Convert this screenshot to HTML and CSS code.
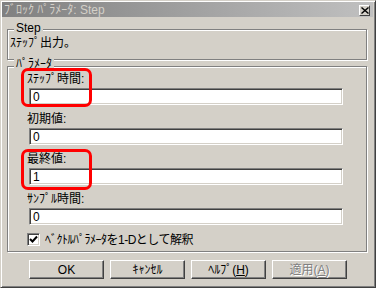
FILE: index.html
```html
<!DOCTYPE html>
<html lang="ja">
<head>
<meta charset="utf-8">
<link rel="stylesheet" href="styles.css">
</head>
<body>
<div class="window">
  <div class="titlebar">
    <span class="title">ﾌﾞﾛｯｸ ﾊﾟﾗﾒｰﾀ: Step</span>
    <span class="close"><svg width="8" height="7" viewBox="0 0 8 7"><path d="M0.5 0.5 L7.5 6.5 M7.5 0.5 L0.5 6.5" stroke="#000" stroke-width="1.4" fill="none"/></svg></span>
  </div>
  <div class="content">
    <div class="group g1">
      <span class="legend">Step</span>
      <p class="desc">ｽﾃｯﾌﾟ出力。</p>
    </div>
    <div class="group g2">
      <span class="legend">ﾊﾟﾗﾒｰﾀ</span>
      <div class="field">
        <div class="label">ｽﾃｯﾌﾟ時間:</div>
        <div class="input">0</div>
      </div>
      <div class="field">
        <div class="label">初期値:</div>
        <div class="input">0</div>
      </div>
      <div class="field">
        <div class="label">最終値:</div>
        <div class="input">1</div>
      </div>
      <div class="field">
        <div class="label">ｻﾝﾌﾟﾙ時間:</div>
        <div class="input">0</div>
      </div>
      <div class="check">
        <span class="box"><svg width="9" height="9" viewBox="0 0 9 9"><path d="M1 4 L3.5 6.5 L8 1.5" stroke="#000" stroke-width="2" fill="none"/></svg></span>
        <span class="check-text">ﾍﾞｸﾄﾙﾊﾟﾗﾒｰﾀを1-Dとして解釈</span>
      </div>
    </div>
    <div class="buttons">
      <div class="btn">OK</div>
      <div class="btn">ｷｬﾝｾﾙ</div>
      <div class="btn">ﾍﾙﾌﾟ(<u>H</u>)</div>
      <div class="btn disabled">適用(<u>A</u>)</div>
    </div>
  </div>
  <div class="mark m1"></div>
  <div class="mark m2"></div>
</div>
</body>
</html>
```
FILE: styles.css
```css
* { box-sizing: border-box; }
html, body {
  margin: 0;
  padding: 0;
  background: #d4d0c8;
}
body {
  font-family: "Liberation Sans", "Noto Sans CJK JP", sans-serif;
  font-size: 12px;
  line-height: 12px;
  color: #000;
}
.window {
  position: relative;
  width: 376px;
  height: 288px;
  background: #d4d0c8;
  border: 1px solid;
  border-color: #d4d0c8 #404040 #404040 #d4d0c8;
  box-shadow: inset 1px 1px #fff, inset -1px -1px #808080;
  padding: 1px 2px 2px 1px;
}
.titlebar {
  height: 15px;
  display: flex;
  align-items: center;
  justify-content: space-between;
  padding: 0 2px 0 2px;
  background: linear-gradient(to right, #808080, #c0c0c0);
}
.title {
  color: #d4d0c8;
  font-size: 12px;
  line-height: 12px;
  white-space: nowrap;
}
.close {
  width: 11px;
  height: 11px;
  background: #d4d0c8;
  border: 1px solid;
  border-color: #fff #404040 #404040 #fff;
  display: flex;
  align-items: center;
  justify-content: center;
  margin-top: 2px;
  margin-right: 1px;
}
.close svg { display: block; }
.content {
  padding: 12px 0 0 5px;
}
.group {
  position: relative;
  width: 360px;
  border: 1px solid #808080;
  box-shadow: inset 1px 1px #fff, 1px 1px #fff;
}
.legend {
  position: absolute;
  top: -7px;
  left: 6px;
  padding: 0 2px;
  background: #d4d0c8;
  line-height: 11px;
}
.g2 .legend { top: -8px; }
.g1 { height: 31px; }
.desc {
  margin: 0;
  padding: 7px 0 0 2px;
}
.g2 {
  margin-top: 6px;
  height: 186px;
  padding: 6px 0 0 19px;
}
.field {
  display: flex;
  flex-direction: column;
  align-items: flex-start;
  gap: 3px;
  margin-bottom: 8px;
}
.label { height: 12px; }
.input {
  margin-left: 2px;
  width: 314px;
  height: 17px;
  background: #fff;
  border: 1px solid;
  border-color: #808080 #fff #fff #808080;
  box-shadow: inset 1px 1px #404040, inset -1px -1px #d4d0c8;
  padding: 2px 0 0 3px;
  line-height: 12px;
}
.check {
  display: flex;
  align-items: center;
  gap: 5px;
  margin-top: 1px;
}
.check-text { letter-spacing: -0.5px; }
.box {
  width: 13px;
  height: 13px;
  background: #fff;
  border: 1px solid;
  border-color: #808080 #fff #fff #808080;
  box-shadow: inset 1px 1px #404040, inset -1px -1px #d4d0c8;
  display: flex;
  align-items: center;
  justify-content: center;
}
.box svg { display: block; }
.buttons {
  display: flex;
  gap: 6px;
  margin: 8px 0 0 22px;
}
.btn {
  width: 75px;
  height: 19px;
  border: 1px solid;
  border-color: #fff #404040 #404040 #fff;
  box-shadow: inset -1px -1px #808080;
  display: flex;
  align-items: center;
  justify-content: center;
  line-height: 12px;
}
.btn.disabled {
  color: #808080;
  text-shadow: 1px 1px #fff;
}
.mark {
  position: absolute;
  left: 20px;
  width: 71px;
  border: 3px solid #f00;
  border-radius: 7px;
}
.m1 { top: 67px; height: 39px; }
.m2 { top: 148px; height: 41px; }
```
